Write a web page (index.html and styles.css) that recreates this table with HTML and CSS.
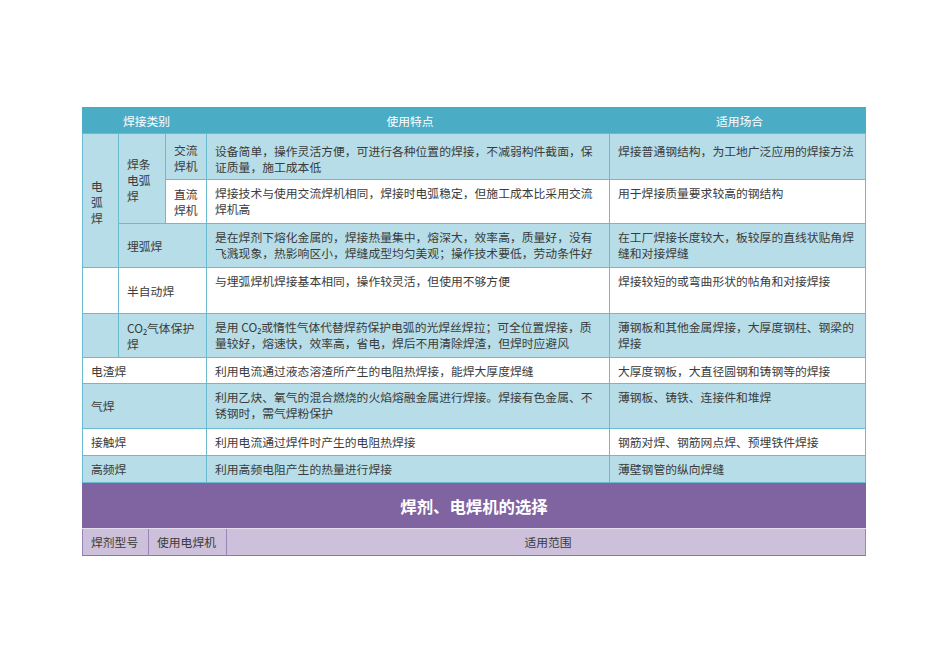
FILE: index.html
```html
<!DOCTYPE html>
<html lang="zh">
<head>
<meta charset="utf-8">
<title>焊接类别</title>
<link rel="stylesheet" href="styles.css">
</head>
<body>
<div class="page">
  <table class="weld">
    <colgroup>
      <col class="c1"><col class="c2"><col class="c3"><col class="c4"><col class="c5">
    </colgroup>
    <thead>
      <tr class="h26">
        <th colspan="3">焊接类别</th>
        <th>使用特点</th>
        <th>适用场合</th>
      </tr>
    </thead>
    <tbody>
      <tr class="blue h46 first">
        <td rowspan="3" class="cat">电弧焊</td>
        <td rowspan="2" class="cat">焊条电弧焊</td>
        <td class="cat">交流焊机</td>
        <td class="txt">设备简单，操作灵活方便，可进行各种位置的焊接，不减弱构件截面，保证质量，施工成本低</td>
        <td class="txt">焊接普通钢结构，为工地广泛应用的焊接方法</td>
      </tr>
      <tr class="white h44">
        <td class="cat">直流焊机</td>
        <td class="txt">焊接技术与使用交流焊机相同，焊接时电弧稳定，但施工成本比采用交流焊机高</td>
        <td class="txt">用于焊接质量要求较高的钢结构</td>
      </tr>
      <tr class="blue h44">
        <td colspan="2" class="cat">埋弧焊</td>
        <td class="txt">是在焊剂下熔化金属的，焊接热量集中，熔深大，效率高，质量好，没有飞溅现象，热影响区小，焊缝成型均匀美观；操作技术要低，劳动条件好</td>
        <td class="txt">在工厂焊接长度较大，板较厚的直线状贴角焊缝和对接焊缝</td>
      </tr>
      <tr class="white h46">
        <td class="cat"></td>
        <td colspan="2" class="cat">半自动焊</td>
        <td class="txt">与埋弧焊机焊接基本相同，操作较灵活，但使用不够方便</td>
        <td class="txt">焊接较短的或弯曲形状的帖角和对接焊接</td>
      </tr>
      <tr class="blue h44">
        <td class="cat"></td>
        <td colspan="2" class="cat">CO₂气体保护焊</td>
        <td class="txt">是用 CO₂或惰性气体代替焊药保护电弧的光焊丝焊拉；可全位置焊接，质量较好，熔速快，效率高，省电，焊后不用清除焊渣，但焊时应避风</td>
        <td class="txt">薄钢板和其他金属焊接，大厚度钢柱、钢梁的焊接</td>
      </tr>
      <tr class="white h26">
        <td colspan="3" class="cat">电渣焊</td>
        <td class="txt">利用电流通过液态溶渣所产生的电阻热焊接，能焊大厚度焊缝</td>
        <td class="txt">大厚度钢板，大直径圆钢和铸钢等的焊接</td>
      </tr>
      <tr class="blue h45">
        <td colspan="3" class="cat">气焊</td>
        <td class="txt">利用乙炔、氧气的混合燃烧的火焰熔融金属进行焊接。焊接有色金属、不锈钢时，需气焊粉保护</td>
        <td class="txt">薄钢板、铸铁、连接件和堆焊</td>
      </tr>
      <tr class="white h27">
        <td colspan="3" class="cat">接触焊</td>
        <td class="txt">利用电流通过焊件时产生的电阻热焊接</td>
        <td class="txt">钢筋对焊、钢筋网点焊、预埋铁件焊接</td>
      </tr>
      <tr class="blue h27">
        <td colspan="3" class="cat">高频焊</td>
        <td class="txt">利用高频电阻产生的热量进行焊接</td>
        <td class="txt">薄壁钢管的纵向焊缝</td>
      </tr>
    </tbody>
  </table>
  <table class="flux">
    <colgroup>
      <col class="f1"><col class="f2"><col class="f3">
    </colgroup>
    <tr class="title">
      <th colspan="3">焊剂、电焊机的选择</th>
    </tr>
    <tr class="sub-head">
      <td>焊剂型号</td>
      <td>使用电焊机</td>
      <td class="center">适用范围</td>
    </tr>
  </table>
</div>
</body>
</html>
```

FILE: styles.css
```css
html, body {
  margin: 0;
  padding: 0;
  background: #ffffff;
}

.page {
  padding: 107px 0 0 82px;
  font-family: "Noto Sans CJK SC", "Noto Sans", sans-serif;
  font-size: 11.8px;
  color: #3b3b3b;
}

table {
  border-collapse: collapse;
  table-layout: fixed;
  width: 783px;
}

.weld th,
.weld td {
  border: 1px solid #6bbad0;
  line-height: 16px;
  padding: 0 4px 0 8px;
  text-align: left;
  font-weight: normal;
}

.weld .c1 { width: 36px; }
.weld .c2 { width: 47px; }
.weld .c3 { width: 41px; }
.weld .c4 { width: 403px; }
.weld .c5 { width: 256px; }

.weld thead th {
  background: #4bacc6;
  color: #ffffff;
  text-align: center;
  vertical-align: middle;
  border-color: #4bacc6;
  border-bottom-color: #6bbad0;
}

.weld td.cat {
  vertical-align: middle;
}

.weld td.txt {
  vertical-align: top;
  padding-top: 5px;
  padding-right: 8px;
}

.weld tr.first td.txt {
  padding-top: 9px;
}

.weld tr.first td.cat {
  padding-top: 3px;
}

.blue td { background: #b7dee8; }
.white td { background: #ffffff; }

.h26 { height: 26px; }
.h27 { height: 27px; }
.h44 { height: 44px; }
.h45 { height: 45px; }
.h46 { height: 46px; }

.flux td,
.flux th {
  border: 1px solid #9a85b8;
  padding: 0 4px 0 8px;
  line-height: 16px;
}

.flux .f1 { width: 66px; }
.flux .f2 { width: 78px; }
.flux .f3 { width: 639px; }

.flux .title {
  height: 45px;
}

.flux .title th {
  background: #7f64a1;
  border-color: #7f64a1;
  border-bottom-color: #e6def0;
  color: #ffffff;
  font-size: 16.4px;
  font-weight: bold;
  text-align: center;
  padding: 0;
}

.flux .sub-head {
  height: 27px;
}

.flux .sub-head td {
  background: #ccc0da;
  border-top-color: #e6def0;
  border-bottom-color: #8e76ad;
}

.flux .center {
  text-align: center;
}
```
